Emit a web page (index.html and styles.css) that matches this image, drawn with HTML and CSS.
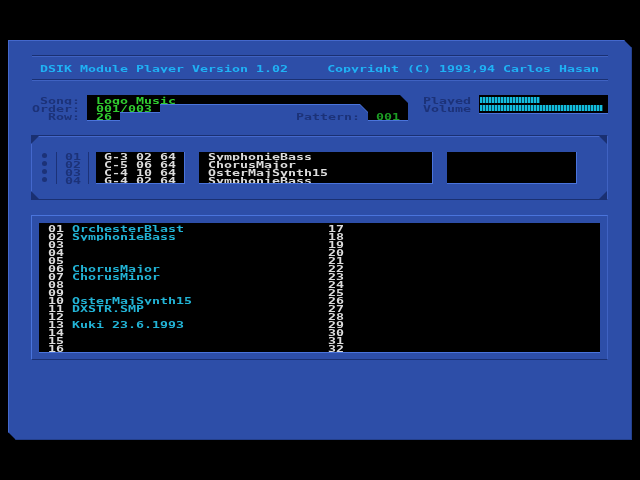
FILE: index.html
```html
<!DOCTYPE html>
<html lang="en">
<head>
<meta charset="utf-8">
<title>DSIK Module Player</title>
<link rel="stylesheet" href="styles.css">
</head>
<body>
<main class="panel">
  <header class="title">
    <div class="t">DSIK Module Player Version 1.02</div>
    <div class="t">Copyright (C) 1993,94 Carlos Hasan</div>
  </header>

  <section class="info">
    <div class="labels">
      <div class="t">Song:</div>
      <div class="t">Order:</div>
      <div class="t">Row:</div>
    </div>
    <div class="shape-area">
      <div class="shape-edge">
        <div class="shape">
          <div class="t">Logo Music</div>
          <div class="t">001/003</div>
          <div class="t">26</div>
        </div>
      </div>
      <div class="pattern">
        <div class="t pat-label">Pattern:</div>
        <div class="t pat-value">001</div>
      </div>
    </div>
    <div class="labels meter-labels">
      <div class="t">Played</div>
      <div class="t">Volume</div>
    </div>
    <div class="meters">
      <div class="bar bar-played"></div>
      <div class="bar bar-volume"></div>
    </div>
  </section>

  <section class="channels">
    <span class="corner c-tl"></span><span class="corner c-tr"></span>
    <span class="corner c-bl"></span><span class="corner c-br"></span>
    <div class="dots"><i></i><i></i><i></i><i></i></div>
    <div class="nums">
      <div class="t">01</div><div class="t">02</div><div class="t">03</div><div class="t">04</div>
    </div>
    <div class="well notes">
      <div class="t">G-3 02 64</div>
      <div class="t">C-5 06 64</div>
      <div class="t">C-4 10 64</div>
      <div class="t">G-4 02 64</div>
    </div>
    <div class="well names">
      <div class="t">SymphonieBass</div>
      <div class="t">ChorusMajor</div>
      <div class="t">OsterMajSynth15</div>
      <div class="t">SymphonieBass</div>
    </div>
    <div class="well blank"></div>
  </section>

  <section class="list-frame">
    <div class="list">
      <div class="col col-a">
        <div class="row"><b class="t">01</b><span class="t">OrchesterBlast</span></div>
        <div class="row"><b class="t">02</b><span class="t">SymphonieBass</span></div>
        <div class="row"><b class="t">03</b></div>
        <div class="row"><b class="t">04</b></div>
        <div class="row"><b class="t">05</b></div>
        <div class="row"><b class="t">06</b><span class="t">ChorusMajor</span></div>
        <div class="row"><b class="t">07</b><span class="t">ChorusMinor</span></div>
        <div class="row"><b class="t">08</b></div>
        <div class="row"><b class="t">09</b></div>
        <div class="row"><b class="t">10</b><span class="t">OsterMajSynth15</span></div>
        <div class="row"><b class="t">11</b><span class="t">DXSTR.SMP</span></div>
        <div class="row"><b class="t">12</b></div>
        <div class="row"><b class="t">13</b><span class="t">Kuki 23.6.1993</span></div>
        <div class="row"><b class="t">14</b></div>
        <div class="row"><b class="t">15</b></div>
        <div class="row"><b class="t">16</b></div>
      </div>
      <div class="col col-b">
        <div class="row"><b class="t">17</b></div>
        <div class="row"><b class="t">18</b></div>
        <div class="row"><b class="t">19</b></div>
        <div class="row"><b class="t">20</b></div>
        <div class="row"><b class="t">21</b></div>
        <div class="row"><b class="t">22</b></div>
        <div class="row"><b class="t">23</b></div>
        <div class="row"><b class="t">24</b></div>
        <div class="row"><b class="t">25</b></div>
        <div class="row"><b class="t">26</b></div>
        <div class="row"><b class="t">27</b></div>
        <div class="row"><b class="t">28</b></div>
        <div class="row"><b class="t">29</b></div>
        <div class="row"><b class="t">30</b></div>
        <div class="row"><b class="t">31</b></div>
        <div class="row"><b class="t">32</b></div>
      </div>
    </div>
  </section>
</main>
</body>
</html>
```

FILE: styles.css
```css
* { box-sizing: border-box; }

html, body { margin: 0; height: 100%; background: #000; }

body { padding: 40px 8px; overflow: hidden; }

.panel {
  width: 624px;
  height: 400px;
  padding: 15px 24px 0 23px;
  background: #2d4ea8;
  box-shadow: inset 1px 1px 0 #4468cc, inset -1px -1px 0 #24408c;
  clip-path: polygon(0 0, 616px 0, 624px 8px, 624px 400px, 8px 400px, 0 392px);
  display: flex;
  flex-direction: column;
  gap: 15px;
}

/* One line of squat text on a wide 8px character cell */
.t {
  display: block;
  font-family: "DejaVu Sans Mono", monospace;
  font-size: 13.29px;
  font-weight: 700;
  line-height: 8px;
  height: 8px;
  white-space: pre;
  transform: scaleY(0.72);
  transform-origin: 0 100%;
  clip-path: inset(-6px -2px -1px -2px);
}

.title {
  height: 25px;
  padding: 8px 9px 0 8px;
  margin-left: 1px;
  border-top: 1px solid #1a3072;
  border-bottom: 1px solid #1a3072;
  box-shadow: inset 0 1px 0 #3f62c2, 0 1px 0 #3f62c2;
  display: flex;
  justify-content: space-between;
  color: #1fb2f5;
}

/* Song / order / row */
.info {
  height: 25px;
  display: flex;
  align-items: flex-start;
  color: #1c3278;
}

.labels {
  width: 49px;
  padding-top: 1px;
  display: flex;
  flex-direction: column;
  align-items: flex-end;
}

.shape-area {
  width: 321px;
  height: 25px;
  margin-left: 7px;
  display: grid;
}

.shape-edge {
  grid-area: 1 / 1;
  filter: drop-shadow(0 1px 0 #4a74dc);
}

.shape {
  height: 25px;
  padding: 1px 0 0 9px;
  background: #000;
  color: #30cc30;
  clip-path: polygon(0 0, 313px 0, 321px 8px, 321px 25px, 281px 25px, 281px 17px, 273px 9px, 73px 9px, 73px 17px, 33px 17px, 33px 25px, 0 25px);
}

.pattern {
  grid-area: 1 / 1;
  display: flex;
  justify-content: flex-end;
  align-items: flex-end;
  gap: 16px;
  padding: 0 8px 0 0;
  z-index: 1;
}

.pat-value { color: #1c9c24; }

.meter-labels {
  width: 56px;
  margin-left: 15px;
  align-items: flex-start;
}

.meters {
  width: 129px;
  height: 18px;
  padding: 2px 1px 0;
  background: #000;
  box-shadow: 0 1px 0 #4a74dc;
  display: flex;
  flex-direction: column;
  gap: 2px;
}

.bar {
  height: 6px;
  background: repeating-linear-gradient(90deg, #12bede 0 2px, #07495c 2px 3px);
}

.bar-played { width: 60px; }
.bar-volume { width: 123px; }

/* Channels */
.channels {
  position: relative;
  height: 65px;
  border-top: 1px solid #1a3072;
  border-bottom: 1px solid #1a3072;
  border-right: 1px solid #3f62c2;
  box-shadow: inset 0 1px 0 #4468cc, inset 1px 0 0 #4468cc;
  display: flex;
  align-items: flex-start;
  padding: 16px 0 0 11px;
}

.corner {
  position: absolute;
  width: 8px;
  height: 8px;
  background: #1a3072;
}

.c-tl { top: 0; left: 0; clip-path: polygon(0 0, 100% 0, 0 100%); }
.c-tr { top: 0; right: 0; clip-path: polygon(0 0, 100% 0, 100% 100%); }
.c-bl { bottom: 0; left: 0; clip-path: polygon(0 0, 100% 100%, 0 100%); }
.c-br { bottom: 0; right: 0; clip-path: polygon(100% 0, 100% 100%, 0 100%); }

.dots {
  width: 6px;
  height: 32px;
  display: flex;
  flex-direction: column;
}

.dots i {
  width: 5px;
  height: 5px;
  margin: 1px 0 2px;
  border-radius: 50%;
  background: #1c3278;
}

.nums {
  width: 33px;
  height: 32px;
  margin-left: 8px;
  padding-left: 8px;
  border-left: 1px solid #1c3278;
  border-right: 1px solid #1c3278;
  color: #1c3278;
}

.well {
  height: 32px;
  background: #000;
  border-bottom: 1px solid #4a74dc;
  box-shadow: 1px 0 0 #4a74dc;
  overflow: hidden;
  color: #dcdcdc;
}

.notes { width: 88px; margin-left: 7px; padding-left: 8px; }
.names { width: 233px; margin-left: 15px; padding-left: 9px; }
.blank { width: 129px; margin-left: 15px; }

/* Sample list */
.list-frame {
  height: 145px;
  padding: 7px;
  border-top: 1px solid #4a74dc;
  border-left: 1px solid #4a74dc;
  border-bottom: 1px solid #1a3072;
  border-right: 1px solid #3f62c2;
}

.list {
  height: 129px;
  padding-top: 1px;
  background: #000;
  display: flex;
  overflow: hidden;
  box-shadow: 0 1px 0 #4a74dc;
}

.col-a { width: 280px; padding-left: 9px; }
.col-b { flex: 1; padding-left: 9px; }

.row { display: flex; height: 8px; }

.row b { width: 24px; color: #dcdcdc; }
.row span { color: #22b4d6; }
```
